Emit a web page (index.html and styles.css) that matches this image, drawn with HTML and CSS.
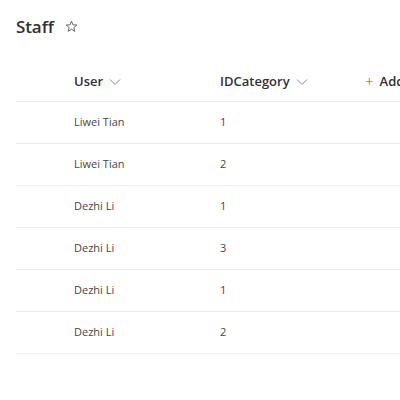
FILE: index.html
```html
<!DOCTYPE html>
<html>
<head>
<meta charset="utf-8">
<link rel="stylesheet" href="styles.css">
</head>
<body>
<div class="page">
  <div class="title-row">
    <h1 class="title">Staff</h1>
    <svg class="star" width="13" height="13" viewBox="0 0 14 14"><path d="M7 1.2 L8.6 5.2 L12.8 5.4 L9.5 8.1 L10.6 12.3 L7 9.9 L3.4 12.3 L4.5 8.1 L1.2 5.4 L5.4 5.2 Z" fill="none" stroke="#605e5c" stroke-width="1" stroke-linejoin="round"/></svg>
  </div>
  <div class="table">
    <div class="row head">
      <div class="cell check"></div>
      <div class="cell user">User <svg class="chev" width="12" height="8" viewBox="0 0 12 8"><path d="M1 1.5 L6 6.5 L11 1.5" fill="none" stroke="#8a8886" stroke-width="1"/></svg></div>
      <div class="cell cat">IDCategory <svg class="chev" width="12" height="8" viewBox="0 0 12 8"><path d="M1 1.5 L6 6.5 L11 1.5" fill="none" stroke="#8a8886" stroke-width="1"/></svg></div>
      <div class="cell add"><span class="plus">+</span> Add column</div>
    </div>
    <div class="row"><div class="cell check"></div><div class="cell user">Liwei Tian</div><div class="cell cat">1</div></div>
    <div class="row"><div class="cell check"></div><div class="cell user">Liwei Tian</div><div class="cell cat">2</div></div>
    <div class="row"><div class="cell check"></div><div class="cell user">Dezhi Li</div><div class="cell cat">1</div></div>
    <div class="row"><div class="cell check"></div><div class="cell user">Dezhi Li</div><div class="cell cat">3</div></div>
    <div class="row"><div class="cell check"></div><div class="cell user">Dezhi Li</div><div class="cell cat">1</div></div>
    <div class="row"><div class="cell check"></div><div class="cell user">Dezhi Li</div><div class="cell cat">2</div></div>
  </div>
</div>
</body>
</html>
```
FILE: styles.css
```css
html, body {
  margin: 0;
  background: #fff;
  overflow: hidden;
}
body {
  font-family: "Open Sans", "Noto Sans", sans-serif;
  color: #323130;
}
.page {
  width: 400px;
  height: 400px;
  overflow: hidden;
}
.title-row {
  display: flex;
  align-items: center;
  gap: 11px;
  padding: 12px 16px 0 16px;
  height: 30px;
}
.title {
  margin: 0;
  font-size: 17px;
  font-weight: 600;
  line-height: 30px;
  letter-spacing: -0.1px;
}
.star {
  margin-top: -1px;
}
.table {
  margin-top: 19px;
  margin-left: 16px;
  width: 500px;
}
.row {
  display: flex;
  align-items: center;
  box-sizing: border-box;
  height: 42px;
  padding-bottom: 3px;
  border-bottom: 1px solid #edebe9;
  font-size: 11px;
  color: #484644;
  white-space: nowrap;
}
.row.head {
  height: 41px;
  padding-bottom: 0;
  font-size: 13px;
  font-weight: 600;
  color: #323130;
}
.cell.check {
  width: 58px;
  flex: none;
}
.cell.user {
  width: 146px;
  flex: none;
  display: flex;
  align-items: center;
  gap: 6px;
}
.cell.cat {
  width: 145px;
  flex: none;
  display: flex;
  align-items: center;
  gap: 6px;
}
.cell.add {
  font-weight: 600;
  display: flex;
  align-items: center;
  gap: 6px;
}
.plus {
  font-weight: 300;
  color: #605e5c;
  font-size: 15px;
}
.chev {
  margin-top: 1px;
}
```
